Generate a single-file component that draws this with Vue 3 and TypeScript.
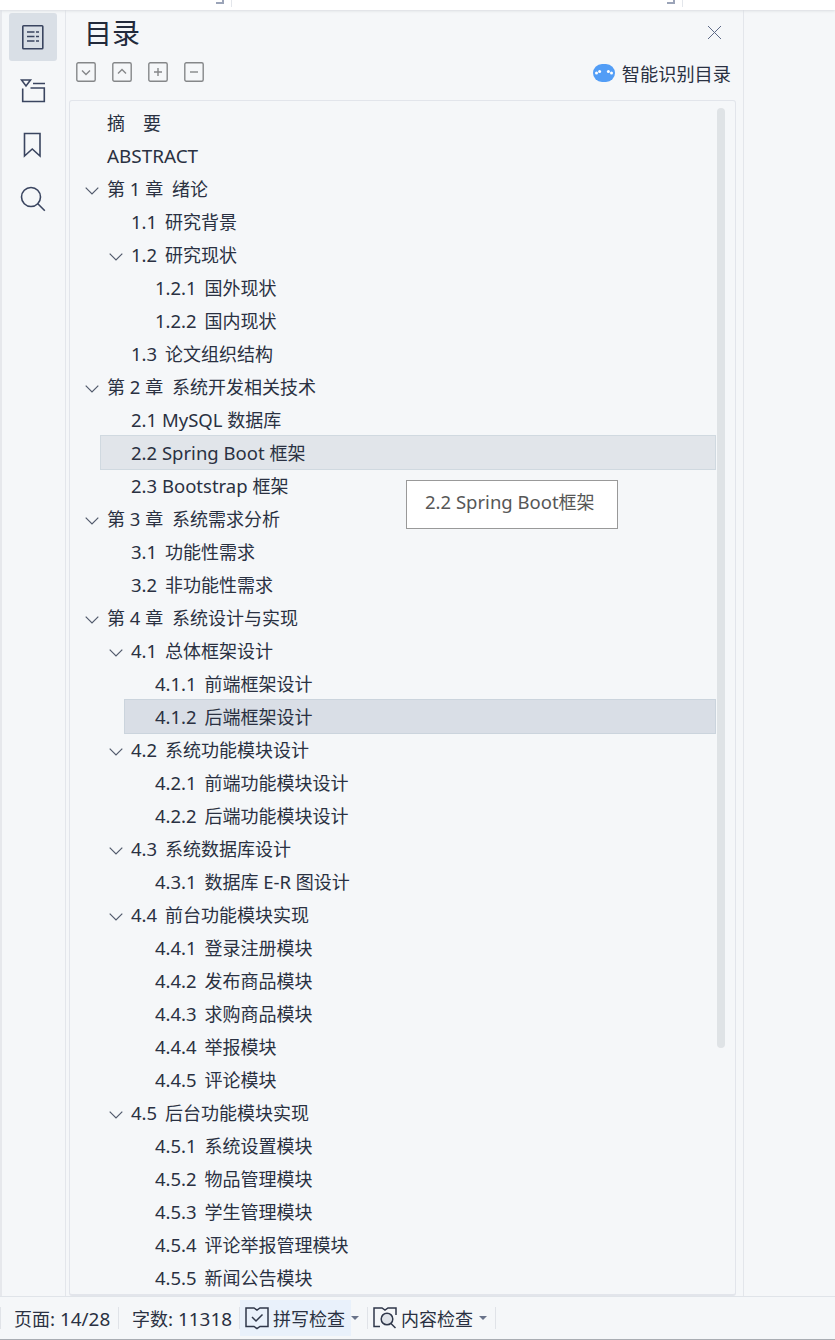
<script setup lang="ts">
interface Entry {
  level: number
  text: string
  open?: boolean
  state?: 'hover' | 'current'
}

interface Run {
  text: string
  kind: 'latin' | 'caps' | 'gap' | 'cjk'
}

const entries: Entry[] = [
  { level: 0, text: '摘\u3000要' },
  { level: 0, text: 'ABSTRACT' },
  { level: 0, text: '第 1 章  绪论', open: true },
  { level: 1, text: '1.1  研究背景' },
  { level: 1, text: '1.2  研究现状', open: true },
  { level: 2, text: '1.2.1  国外现状' },
  { level: 2, text: '1.2.2  国内现状' },
  { level: 1, text: '1.3  论文组织结构' },
  { level: 0, text: '第 2 章  系统开发相关技术', open: true },
  { level: 1, text: '2.1 MySQL 数据库' },
  { level: 1, text: '2.2 Spring Boot 框架', state: 'hover' },
  { level: 1, text: '2.3 Bootstrap 框架' },
  { level: 0, text: '第 3 章  系统需求分析', open: true },
  { level: 1, text: '3.1  功能性需求' },
  { level: 1, text: '3.2  非功能性需求' },
  { level: 0, text: '第 4 章  系统设计与实现', open: true },
  { level: 1, text: '4.1  总体框架设计', open: true },
  { level: 2, text: '4.1.1  前端框架设计' },
  { level: 2, text: '4.1.2  后端框架设计', state: 'current' },
  { level: 1, text: '4.2  系统功能模块设计', open: true },
  { level: 2, text: '4.2.1  前端功能模块设计' },
  { level: 2, text: '4.2.2  后端功能模块设计' },
  { level: 1, text: '4.3  系统数据库设计', open: true },
  { level: 2, text: '4.3.1  数据库 E-R 图设计' },
  { level: 1, text: '4.4  前台功能模块实现', open: true },
  { level: 2, text: '4.4.1  登录注册模块' },
  { level: 2, text: '4.4.2  发布商品模块' },
  { level: 2, text: '4.4.3  求购商品模块' },
  { level: 2, text: '4.4.4  举报模块' },
  { level: 2, text: '4.4.5  评论模块' },
  { level: 1, text: '4.5  后台功能模块实现', open: true },
  { level: 2, text: '4.5.1  系统设置模块' },
  { level: 2, text: '4.5.2  物品管理模块' },
  { level: 2, text: '4.5.3  学生管理模块' },
  { level: 2, text: '4.5.4  评论举报管理模块' },
  { level: 2, text: '4.5.5  新闻公告模块' },
]

// Splits a label so that Latin text and double spaces can be sized on their own.
function runs(text: string): Run[] {
  const parts = text.match(/ {2}|(?:[\x21-\x7e]| (?! ))+|[^\x20-\x7e]+/g) ?? []
  return parts.map((p) => ({
    text: p,
    kind: p === '  ' ? 'gap' : /^[A-Z]+$/.test(p) ? 'caps' : /^[\x20-\x7e]/.test(p) ? 'latin' : 'cjk',
  }))
}

const tools: string[] = ['M6 8.5l4 4 4-4', 'M6 11.5l4-4 4 4', 'M6 10h8M10 6v8', 'M6 10h8']
</script>

<template>
  <div class="app">
    <div class="ribbon">
      <i class="corner first"></i><i class="rule"></i>
      <i class="corner second"></i><i class="rule"></i>
    </div>
    <div class="body">
      <nav class="rail">
        <button class="rail-btn active">
          <svg width="24" height="26" viewBox="0 0 24 26"><rect x="1.8" y="1.8" width="20" height="23" rx=".8" /><path d="M6 8h7.500M15 8h3M6 12.500h7.500M15 12.500h3M6 17h7.500M15 17h3" /></svg>
        </button>
        <button class="rail-btn">
          <svg width="26" height="26" viewBox="0 0 26 26"><path d="M1.500 2h9l-4.500 6zM13 5.500h12M10.500 10H24.300v13.500H2.700V10.500" /></svg>
        </button>
        <button class="rail-btn">
          <svg width="20" height="26" viewBox="0 0 20 26"><path d="M1.500 1.500h15.500v22.500l-7.750-7-7.750 7z" /></svg>
        </button>
        <button class="rail-btn">
          <svg width="26" height="26" viewBox="0 0 26 26"><circle cx="11" cy="11" r="9.500" /><path d="M17.800 17.800l7 7" /></svg>
        </button>
      </nav>
      <section class="panel">
        <header class="head">
          <h1>目录</h1>
          <svg class="close" width="15" height="15" viewBox="0 0 15 15"><path d="M1 1l13 13M14 1L1 14" /></svg>
        </header>
        <div class="toolbar">
          <svg v-for="(d, i) in tools" :key="i" class="tool" width="20" height="20" viewBox="0 0 20 20"><rect x=".8" y=".8" width="18.400" height="18.400" rx="1.500" /><path :d="d" /></svg>
          <div class="smart">
            <svg width="22" height="18" viewBox="0 0 22 18"><rect width="22" height="18" rx="9" fill="#529df6" /><g fill="#fff"><circle cx="3.500" cy="9" r="1.500" /><circle cx="6.600" cy="7.500" r="1.500" /><circle cx="15.400" cy="7.500" r="1.500" /><circle cx="18.500" cy="9" r="1.500" /></g></svg>
            <span>智能识别目录</span>
          </div>
        </div>
        <div class="list">
          <div class="rows">
            <div v-for="e in entries" :key="e.text" class="row" :class="['l' + e.level, e.state]">
              <span class="arrow"><svg v-if="e.open" width="14" height="8" viewBox="0 0 14 8"><path d="M.7.7L7 7 13.300.7" /></svg></span>
              <span class="label"><span v-for="(r, i) in runs(e.text)" :key="i" :class="r.kind">{{ r.text }}</span></span>
            </div>
          </div>
          <div class="thumb"></div>
          <div class="tip"><span class="latin">2.2 Spring Boot</span>框架</div>
        </div>
      </section>
      <div class="blank"></div>
    </div>
    <footer class="status">
      <i class="sep s0"></i>
      <span class="pages">页面<span class="caps">: 14/28</span></span>
      <i class="sep s1"></i>
      <span class="words">字数<span class="caps">: 11318</span></span>
      <i class="sep s2"></i>
      <div class="check spell">
        <svg width="24" height="23" viewBox="0 0 24 23"><path d="M1 1h8l3 2 3-2h8v18.500h-8l-3 2-3-2H1zM7 10l4 4 6.500-6.500" /></svg>
        <span>拼写检查</span><i class="caret"></i>
      </div>
      <i class="sep s3"></i>
      <div class="check content">
        <svg width="24" height="23" viewBox="0 0 24 23"><path d="M7 19.500H1V1h8l3 2 3-2h8v7" /><circle cx="14" cy="12" r="5.800" fill="#dfe3e9" /><path d="M18 16.500l4.500 4.500" /></svg>
        <span>内容检查</span><i class="caret"></i>
      </div>
      <i class="sep s4"></i>
    </footer>
  </div>
</template>

<style>
body { margin: 0; overflow: hidden; }
</style>

<style scoped>
* { box-sizing: border-box; }
.app { width: 835px; height: 1340px; display: flex; flex-direction: column; background: #f5f7f9; color: #2a3142; font-family: "Noto Sans", "Noto Sans CJK SC", sans-serif; font-size: 18px; overflow: hidden; }
svg { fill: none; flex: none; display: block; }
.latin { font-size: 18.500px; line-height: 1; }
.caps { font-size: 18.900px; line-height: 1; }
.gap { word-spacing: -0.800px; }
.ribbon { height: 10px; flex: none; background: #fff; display: flex; align-items: flex-start; box-shadow: 0 1px 3px #d9dce0; z-index: 1; }
.corner { width: 8px; height: 4px; border-right: 2px solid #9ba4b8; border-bottom: 2px solid #9ba4b8; }
.first { margin-left: 216px; }
.second { margin-left: 435px; }
.rule { width: 1px; height: 7px; background: #e3e6eb; margin-left: 7px; }
.body { flex: 1; min-height: 0; display: flex; }
.rail { width: 66px; flex: none; border-left: 2px solid #e6e8ec; border-right: 1px solid #e3e6eb; padding: 3px 0 0 7px; display: flex; flex-direction: column; gap: 6px; }
.rail-btn { width: 48px; height: 48px; padding: 0; border: 0; border-radius: 3px; background: none; display: grid; place-items: center; }
.rail-btn.active { background: #d9dfe6; }
.rail svg { stroke: #3a4560; stroke-width: 1.6; }
.panel { width: 678px; flex: none; border-right: 1px solid #e3e6eb; padding: 0 7px 0 3px; display: flex; flex-direction: column; }
.head { height: 52px; flex: none; display: flex; justify-content: space-between; padding: 0 14px 0 15px; }
h1 { margin: 0; font-size: 28px; font-weight: 400; line-height: 47px; color: #222a3b; }
.close { margin-top: 15px; stroke: #5d6987; stroke-width: 1; }
.toolbar { height: 38px; flex: none; display: flex; gap: 16px; padding: 0 5px 0 7px; }
.tool { stroke: #858789; stroke-width: 1.4; }
.smart { margin-left: auto; display: flex; gap: 7px; height: 24px; align-items: center; }
.smart svg { margin-top: -2px; }
.smart span { font-size: 18.200px; line-height: 24px; }
.list { flex: 1; min-height: 0; border: 1px solid #e2e5eb; border-bottom-width: 2px; border-radius: 3px; position: relative; display: flex; justify-content: space-between; }
.rows { width: 646px; padding-top: 4px; height: 100%; overflow: hidden; }
.row { height: 35px; margin: 0 0 -2px 0; border: 1px solid transparent; display: flex; align-items: center; }
.l0 { margin-left: 6px; }
.l1 { margin-left: 30px; }
.l2 { margin-left: 54px; }
.hover { background: #e1e5ea; border-color: #d0d9e0; }
.current { background: #d9dee6; border-color: #cbd4dd; }
.arrow { width: 30px; flex: none; padding-left: 8px; }
.arrow svg { stroke: #515a6c; stroke-width: 1.2; margin-top: 4px; }
.label { white-space: pre; line-height: 33px; padding-top: 1px; height: 33px; }
.l0 .gap { word-spacing: -0.300px; }
.thumb { width: 8px; height: 940px; margin: 7px 10px 0 0; border-radius: 4px; background: #dfe3e6; }
.tip { position: absolute; left: 336px; top: 379px; width: 212px; height: 49px; border: 1px solid #999; background: #fff; color: #575757; line-height: 43px; padding-left: 18px; white-space: nowrap; }
.blank { flex: 1; }
.status { height: 44px; flex: none; border-top: 1px solid #e0e4e9; border-bottom: 1px solid #a9adb3; display: flex; align-items: center; white-space: nowrap; }
.sep { width: 1px; height: 22px; background: #e0e3e8; flex: none; }
.pages { width: 117px; padding-left: 13px; }
.words { width: 120px; padding-left: 13px; }
.check { display: flex; align-items: center; height: 36px; width: 111px; padding-left: 5px; }
.check svg { stroke: #2f374a; stroke-width: 1.5; }
.check span { margin-left: 4px; }
.spell { background: #e9f1fb; }
.s3 { margin-left: 16px; }
.s4 { margin-left: 16px; }
.caret { border: 4px solid transparent; border-top-color: #69738a; border-bottom: 0; margin-left: 6px; }
</style>
